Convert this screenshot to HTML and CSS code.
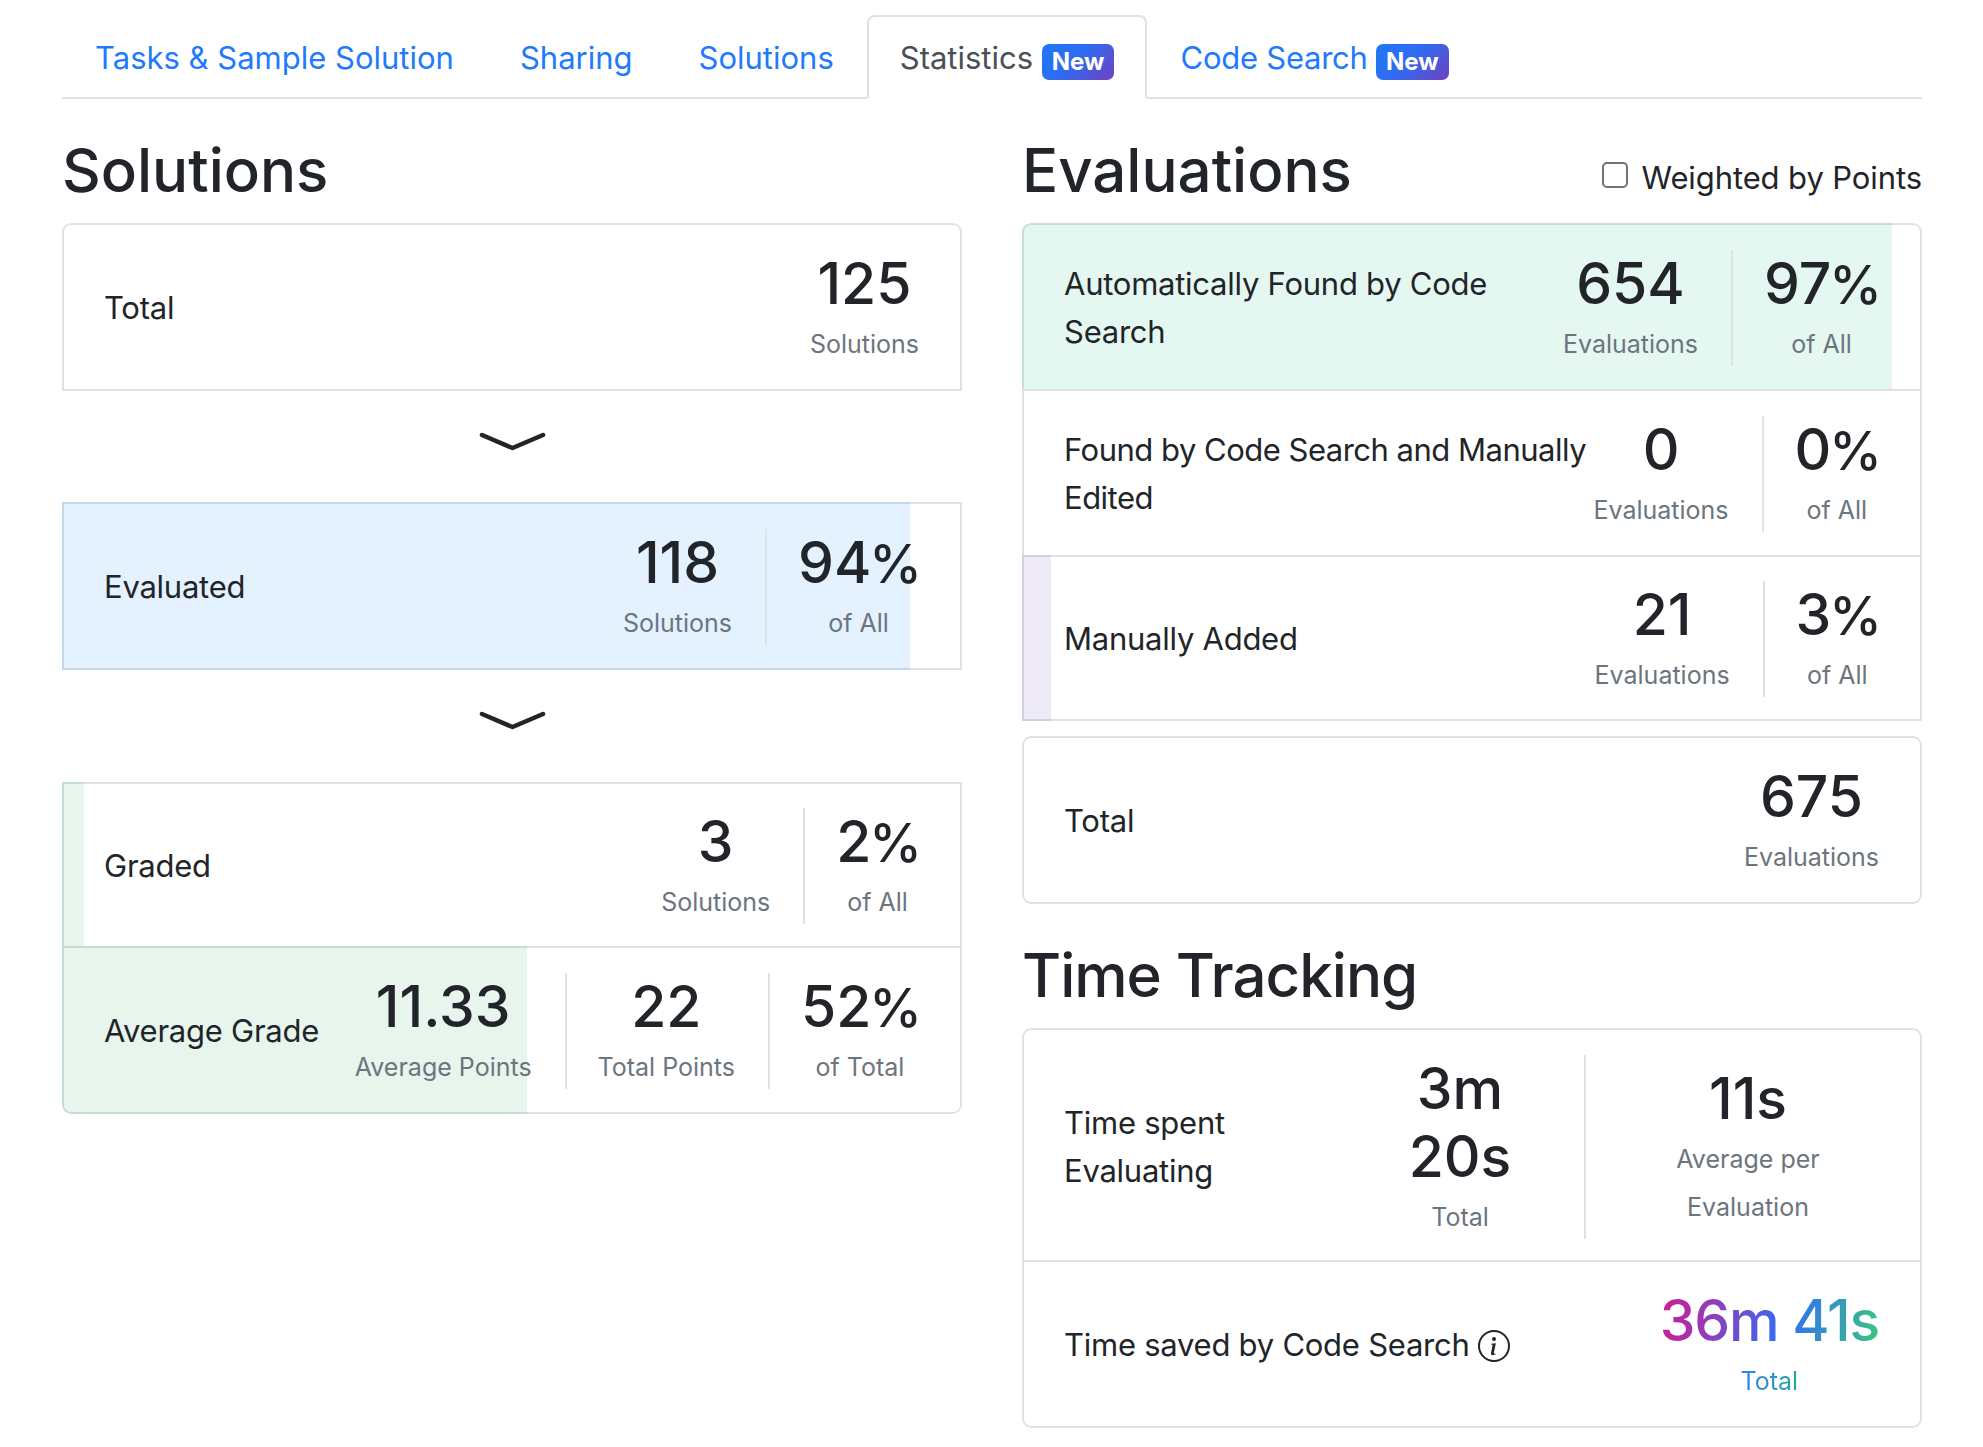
FILE: index.html
```html
<!DOCTYPE html>
<html lang="en">
<head>
    <meta charset="UTF-8">
    <meta name="viewport" content="width=device-width, initial-scale=1.0">
    <title>Statistics</title>
    <link rel="stylesheet" href="styles.css">
</head>
<body>
    <div class="wrapper">
        <nav class="tabs">
            <a class="tab">Tasks &amp; Sample Solution</a>
            <a class="tab">Sharing</a>
            <a class="tab">Solutions</a>
            <a class="tab active">Statistics <span class="badge">New</span></a>
            <a class="tab">Code Search <span class="badge">New</span></a>
        </nav>

        <div class="columns">
            <section>
                <div class="heading"><h2>Solutions</h2></div>

                <div class="list round-top">
                    <div class="row">
                        <div class="label">Total</div>
                        <div class="stat plain"><div class="value">125</div><div class="unit">Solutions</div></div>
                    </div>
                </div>

                <div class="arrow">
                    <svg width="67" height="22" viewBox="0 0 67 22"><path d="M3 5 L33.5 18 L64 5" fill="none" stroke="#212529" stroke-width="4.5" stroke-linecap="round" stroke-linejoin="round"/></svg>
                </div>

                <div class="list">
                    <div class="row">
                        <span class="fill blue" style="width: 94.6%"></span>
                        <div class="label">Evaluated</div>
                        <div class="stat"><div class="value">118</div><div class="unit">Solutions</div></div>
                        <div class="stat"><div class="value">94<span class="pct">%</span></div><div class="unit">of All</div></div>
                    </div>
                </div>

                <div class="arrow low">
                    <svg width="67" height="22" viewBox="0 0 67 22"><path d="M3 5 L33.5 18 L64 5" fill="none" stroke="#212529" stroke-width="4.5" stroke-linecap="round" stroke-linejoin="round"/></svg>
                </div>

                <div class="list round-bottom">
                    <div class="row short">
                        <span class="fill green" style="width: 2.5%"></span>
                        <div class="label">Graded</div>
                        <div class="stat"><div class="value">3</div><div class="unit">Solutions</div></div>
                        <div class="stat"><div class="value">2<span class="pct">%</span></div><div class="unit">of All</div></div>
                    </div>
                    <div class="row">
                        <span class="fill green" style="width: 51.9%"></span>
                        <div class="label">Average Grade</div>
                        <div class="stat"><div class="value">11.33</div><div class="unit">Average Points</div></div>
                        <div class="stat"><div class="value">22</div><div class="unit">Total Points</div></div>
                        <div class="stat"><div class="value">52<span class="pct">%</span></div><div class="unit">of Total</div></div>
                    </div>
                </div>
            </section>

            <section>
                <div class="heading">
                    <h2>Evaluations</h2>
                    <label class="check"><input type="checkbox"> Weighted by Points</label>
                </div>

                <div class="list round-top">
                    <div class="row">
                        <span class="fill teal" style="width: 97.1%"></span>
                        <div class="label">Automatically Found by Code Search</div>
                        <div class="stat"><div class="value">654</div><div class="unit">Evaluations</div></div>
                        <div class="stat"><div class="value">97<span class="pct">%</span></div><div class="unit">of All</div></div>
                    </div>
                    <div class="row">
                        <div class="label tight">Found by Code Search and Manually Edited</div>
                        <div class="stat"><div class="value">0</div><div class="unit">Evaluations</div></div>
                        <div class="stat"><div class="value">0<span class="pct">%</span></div><div class="unit">of All</div></div>
                    </div>
                    <div class="row short">
                        <span class="fill purple" style="width: 3.2%"></span>
                        <div class="label">Manually Added</div>
                        <div class="stat"><div class="value">21</div><div class="unit">Evaluations</div></div>
                        <div class="stat"><div class="value">3<span class="pct">%</span></div><div class="unit">of All</div></div>
                    </div>
                </div>

                <div class="list round-top round-bottom total-card">
                    <div class="row">
                        <div class="label">Total</div>
                        <div class="stat plain"><div class="value">675</div><div class="unit">Evaluations</div></div>
                    </div>
                </div>

                <div class="heading second"><h2>Time Tracking</h2></div>

                <div class="list round-top round-bottom">
                    <div class="row time">
                        <div class="label">Time spent Evaluating</div>
                        <div class="stat time-total"><div class="value">3m<br>20s</div><div class="unit">Total</div></div>
                        <div class="stat time-avg"><div class="value">11s</div><div class="unit">Average per<br>Evaluation</div></div>
                    </div>
                    <div class="row">
                        <div class="label">
                            Time saved by Code Search
                            <svg class="info" width="32" height="32" viewBox="0 0 16 16" fill="#212529"><path d="M8 15A7 7 0 1 1 8 1a7 7 0 0 1 0 14zm0 1A8 8 0 1 0 8 0a8 8 0 0 0 0 16z"/><path d="m8.93 6.588-2.29.287-.082.38.45.083c.294.07.352.176.288.469l-.738 3.468c-.194.897.105 1.319.808 1.319.545 0 1.178-.252 1.465-.598l.088-.416c-.2.176-.492.246-.686.246-.275 0-.375-.193-.304-.533L8.93 6.588zM9 4.5a1 1 0 1 1-2 0 1 1 0 0 1 2 0z"/></svg>
                        </div>
                        <div class="stat plain"><div class="value rainbow">36m 41s</div><div class="unit rainbow-small">Total</div></div>
                    </div>
                </div>
            </section>
        </div>
    </div>
</body>
</html>
```

FILE: styles.css
```css
*{
    padding: 0;
    margin: 0;
    box-sizing: border-box;
    font-family: Inter, "Noto Sans", sans-serif;
}
body{
    color: #212529;
    background: white;
}
.wrapper{
    padding: 15px 61px 0 62px;
}

/* tabs */
.tabs{
    display: flex;
    border-bottom: 2px solid #dee2e6;
}
.tab{
    display: block;
    padding: 17px 31px 15px;
    margin-bottom: -2px;
    font-size: 31px;
    line-height: 48px;
    color: #1f7afc;
    border: 2px solid transparent;
    border-radius: 8px 8px 0 0;
}
.tab:last-child{
    letter-spacing: -0.25px;
}
.tab.active{
    color: #495057;
    background: white;
    border-color: #dee2e6 #dee2e6 white;
}
.badge{
    display: inline-block;
    height: 36px;
    padding: 0 10px;
    font-size: 24px;
    font-weight: 700;
    line-height: 36px;
    letter-spacing: 0;
    color: white;
    vertical-align: -1px;
    border-radius: 7px;
    background: linear-gradient(135deg, #1f78f5, #2f6bf0 45%, #6f42c1);
}

/* columns */
.columns{
    display: grid;
    grid-template-columns: 1fr 1fr;
    column-gap: 60px;
}
.heading{
    display: flex;
    justify-content: space-between;
    align-items: flex-end;
    margin-top: 35px;
    margin-bottom: 17px;
}
.heading.second{
    margin-top: 35px;
}
.heading.second h2{
    letter-spacing: -1px;
}
h2{
    font-size: 60px;
    font-weight: 500;
    line-height: 72px;
}
.check{
    display: flex;
    align-items: center;
    gap: 14px;
    font-size: 31px;
    line-height: 48px;
    letter-spacing: -0.1px;
    padding-bottom: 4px;
}
.check input{
    appearance: none;
    width: 26px;
    height: 26px;
    margin-bottom: 6px;
    border: 2px solid #6e7378;
    border-radius: 5px;
    background: white;
}
.arrow{
    display: flex;
    justify-content: center;
    align-items: center;
    height: 111px;
    padding-bottom: 12px;
}
.arrow.low{
    height: 112px;
}

/* cards */
.list{
    overflow: hidden;
}
.list.round-top{
    border-top-left-radius: 9px;
    border-top-right-radius: 9px;
}
.list.round-bottom{
    border-bottom-left-radius: 9px;
    border-bottom-right-radius: 9px;
}
.total-card{
    margin-top: 15px;
}
.row{
    position: relative;
    display: flex;
    padding: 25px 41px 23px 40px;
    border: 2px solid #dee2e6;
    margin-top: -2px;
}
.row:first-child{
    margin-top: 0;
}
.row.short{
    padding-top: 24px;
    padding-bottom: 22px;
}
.row.time{
    padding-bottom: 21px;
}
.list.round-top .row:first-child{
    border-top-left-radius: 9px;
    border-top-right-radius: 9px;
}
.list.round-bottom .row:last-child{
    border-bottom-left-radius: 9px;
    border-bottom-right-radius: 9px;
}
.fill{
    position: absolute;
    top: -2px;
    bottom: -2px;
    left: -2px;
}
.blue{ background: rgba(13, 132, 245, 0.11); }
.green{ background: rgba(20, 160, 70, 0.1); }
.teal{ background: rgba(0, 175, 115, 0.1); }
.purple{ background: rgba(111, 66, 193, 0.11); }

.label{
    position: relative;
    flex: 1;
    align-self: center;
    font-size: 31px;
    line-height: 48px;
    letter-spacing: -0.25px;
}
.label.tight{
    letter-spacing: -0.5px;
}
.stat{
    position: relative;
    display: flex;
    flex-direction: column;
    justify-content: center;
    padding: 0 33px 0 31px;
    text-align: center;
    white-space: nowrap;
    border-left: 2px solid #dee2e6;
}
.row .label + .stat{
    padding-left: 0;
    border-left: none;
}
.row .stat:last-child{
    padding-right: 0;
}
.stat.plain{
    padding: 0;
    border-left: none;
}
.value{
    font-size: 57px;
    font-weight: 500;
    line-height: 68px;
}
.pct{
    font-size: 0.93em;
    line-height: 1;
    margin-left: -2px;
    margin-right: -3px;
}
.unit{
    font-size: 25px;
    line-height: 48px;
    color: #6c757d;
    margin-top: 2px;
    margin-bottom: -2px;
}
.row .time-total{
    width: 248px;
    padding: 0;
}
.time-avg{
    width: 295px;
}
.info{
    vertical-align: -6px;
}
.rainbow{
    color: transparent;
    letter-spacing: -1.2px;
    background: linear-gradient(100deg, #d6198f 0%, #2f6ff5 58%, #3cc77e 100%);
    -webkit-background-clip: text;
    background-clip: text;
}
.rainbow-small{
    color: transparent;
    background: linear-gradient(90deg, #2f80f5 35%, #27a89a 65%);
    -webkit-background-clip: text;
    background-clip: text;
}
```
